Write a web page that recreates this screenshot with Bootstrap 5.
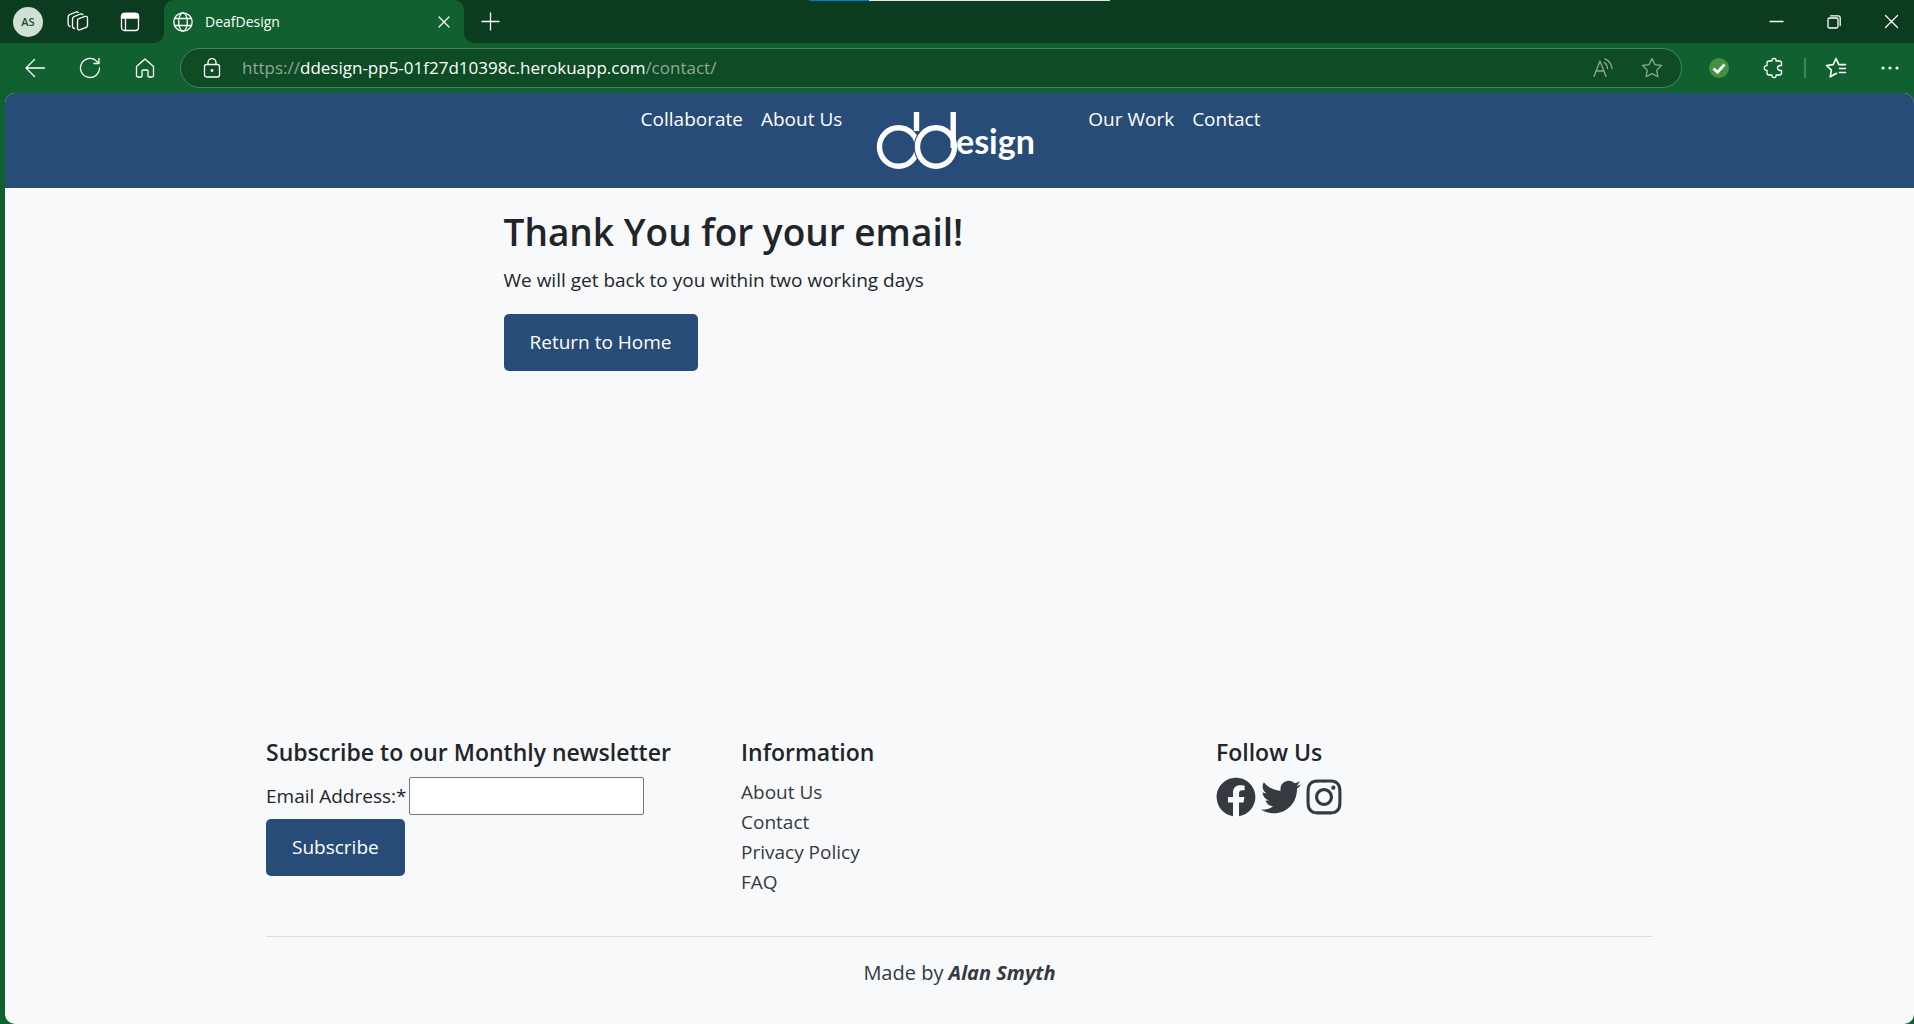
<!DOCTYPE html>
<html lang="en">
<head>
<meta charset="utf-8">
<meta name="viewport" content="width=device-width, initial-scale=1">
<title>DeafDesign</title>
<link href="https://cdn.jsdelivr.net/npm/bootstrap@5.3.0/dist/css/bootstrap.min.css" rel="stylesheet">
<style>
:root{--brand:#274c77;--frame:#10612f;--strip:#0c3c1f;--field:#0d4c24}
body{background:var(--frame);font-family:"Open Sans","Noto Sans",sans-serif;font-size:19px;line-height:30px;min-height:100vh}
svg{display:block;flex:none}
.line-icon{fill:none;stroke:currentColor;stroke-width:1.3;stroke-linecap:round;stroke-linejoin:round}
.bare{background:none;border:0;padding:0;color:#fff;display:flex;align-items:center;justify-content:center}
.strip{background:var(--strip);height:43px}
.strip-left{width:164px;border-bottom-right-radius:10px;padding-left:13px}
.strip-right{border-bottom-left-radius:10px;padding-left:17px;padding-right:15px}
.avatar{width:30px;height:30px;border-radius:50%;background:#cfe0d5;color:#12502a;font-size:11px;font-weight:600}
.tab-back{background:var(--strip)}
.page-tab{width:300px;height:43px;background:var(--frame);border-radius:10px 10px 0 0;font-size:14px;padding:0 14px 0 9px}
.window-buttons{gap:43px}
.loading{top:0;left:809px;width:301px;height:1px;background:linear-gradient(90deg,#0078d4 60px,#e6e6e6 60px)}
.toolbar{height:50px;padding:0 15px 0 25px}
.nav-tools{gap:34px}
.address{height:40px;border:1px solid #4d8061;border-radius:20px;background:var(--field);padding:0 18px 0 21px;margin:0 27px 0 25px;color:#93a79a;font-size:17px}
.address b{font-weight:400;color:#fff}
.dim{color:#8fa497}
.rule{width:2px;height:20px;background:#438159;margin:0 19px}
.wide-gap{margin-left:34px}
.site{margin-left:5px;border-radius:10px;overflow:hidden;background:#f8f9fb;color:#212529}
.site-nav{background:var(--brand);padding:10px 18px 10px 0}
.site-nav a{color:#fff;text-decoration:none;padding:0 9px;line-height:32px}
.site-nav .brand-mark{padding:0 14px}
.wrap{width:100%;max-width:1425px;padding:0 19px;margin:0 auto}
.wrap .row{--bs-gutter-x:38px}
.site h1{font-size:37px;line-height:48px;font-weight:600;margin-bottom:9px}
.site h2{font-size:23px;line-height:30px;font-weight:600;margin-bottom:10px}
.main-area{padding-top:20px;flex:1 0 auto;min-height:549px}
.main-area p{margin-bottom:19px}
.btn-brand{--bs-btn-color:#fff;--bs-btn-bg:var(--brand);--bs-btn-hover-color:#fff;--bs-btn-hover-bg:#1d3a5c;--bs-btn-border-width:0;--bs-btn-border-radius:5px;font-size:19px;line-height:29px;padding:14px 26px}
.mail-box{width:235px;height:38px;border:1px solid #767676;border-radius:2px;background:#fff;margin-left:2px;padding:0 6px}
.foot-links a,.foot-note,.social a{color:#343a40;text-decoration:none}
.social{gap:5px}
.foot-rule{border-top:1px solid #dcdee0;margin-top:39px;padding:21px 0 36px}
.foot-note{font-size:20px}
</style>
<script src="https://cdn.jsdelivr.net/npm/bootstrap@5.3.0/dist/js/bootstrap.bundle.min.js"></script>
</head>
<body class="d-flex flex-column">
<header>
  <div class="loading position-absolute"></div>
  <div class="d-flex">
    <div class="strip strip-left d-flex align-items-center">
      <button class="bare avatar" aria-label="Profile">AS</button>
      <button class="bare ms-4" aria-label="Workspaces"><svg class="line-icon" width="22" height="22" viewBox="0 0 22 22"><path d="M11 8l7-2.6q2.500-.5 2.500 1.600v7.500q0 1.400-1.300 1.900l-6 2.300q-2.700 .9-2.700-1.500V10q0-1.500 .5-2zM7.500 17.500q-2-.2-2-2.500V8q0-2 2-2.700l6-2.300q1.500-.4 2.300 .6M3 15.500q-1.900-.3-1.900-2.500V6q0-2 2-2.700l6-2.300q1.500-.4 2.300 .4"/></svg></button>
      <button class="bare ms-auto me-4" aria-label="Tab actions"><svg class="line-icon" width="20" height="20" viewBox="0 0 20 20"><rect x="1.500" y="1.500" width="17" height="17" rx="3"/><path d="M1.500 6V4.500q0-3 3-3h11q3 0 3 3V6z" fill="currentColor"/><path d="M5.500 6v12.500"/></svg></button>
    </div>
    <div class="tab-back">
      <div class="page-tab d-flex align-items-center">
        <svg class="line-icon text-white" width="20" height="20" viewBox="0 0 20 20"><circle cx="10" cy="10" r="9.200"/><ellipse cx="10" cy="10" rx="4.300" ry="9.200"/><path d="M1.500 6.500h17M1.500 13.500h17"/></svg>
        <span class="text-white ms-2 ps-1">DeafDesign</span>
        <button class="bare ms-auto" aria-label="Close tab"><svg class="line-icon" width="12" height="12" viewBox="0 0 12 12"><path d="M1 1l10 10M11 1L1 11"/></svg></button>
      </div>
    </div>
    <div class="strip strip-right d-flex align-items-center flex-grow-1">
      <button class="bare" aria-label="New tab"><svg class="line-icon" width="19" height="19" viewBox="0 0 19 19"><path d="M9.500 1v17M1 9.500h17"/></svg></button>
      <div class="window-buttons d-flex align-items-center ms-auto">
        <button class="bare" aria-label="Minimise"><svg class="line-icon" width="15" height="15" viewBox="0 0 15 15"><path d="M1 7.500h13"/></svg></button>
        <button class="bare" aria-label="Restore"><svg class="line-icon" width="14" height="14" viewBox="0 0 14 14"><rect x="1" y="3" width="10" height="10" rx="1.500"/><path d="M3.500 .8h7.500q2.200 0 2.200 2.200v7.500"/></svg></button>
        <button class="bare" aria-label="Close window"><svg class="line-icon" width="15" height="15" viewBox="0 0 15 15"><path d="M1.500 1.500l12 12M13.500 1.500l-12 12"/></svg></button>
      </div>
    </div>
  </div>
  <div class="toolbar d-flex align-items-center">
    <div class="nav-tools d-flex align-items-center">
      <button class="bare" aria-label="Back"><svg class="line-icon" width="20" height="20" viewBox="0 0 20 20"><path d="M9.500 1.500L1 10l8.500 8.500M1 10h18.500"/></svg></button>
      <button class="bare" aria-label="Refresh"><svg class="line-icon" width="22" height="22" viewBox="0 0 22 22"><path d="M20.500 11a9.500 9.500 0 1 1-3.500-7.400L20 6.500M20 1.500v5h-5"/></svg></button>
      <button class="bare" aria-label="Home"><svg class="line-icon" width="20" height="20" viewBox="0 0 20 20"><path d="M1.500 8.500L10 1l8.500 7.500v9q0 1.500-1.500 1.500h-3q-1 0-1-1v-5q0-1-1-1H8q-1 0-1 1v5q0 1-1 1H3q-1.500 0-1.500-1.500z"/></svg></button>
    </div>
    <div class="address d-flex align-items-center flex-grow-1">
      <svg class="line-icon text-white" width="20" height="20" viewBox="0 0 20 20"><rect x="2.500" y="6.500" width="15" height="12.500" rx="2"/><path d="M6 6.500V4.500a4 4 0 0 1 8 0v2"/><circle cx="10" cy="12.500" r=".8" fill="currentColor"/></svg>
      <div class="ms-3 ps-1 flex-grow-1" role="textbox" contenteditable="true" spellcheck="false" aria-label="Address">https://<b>ddesign-pp5-01f27d10398c.herokuapp.com</b>/contact/</div>
      <button class="bare dim me-4" aria-label="Read aloud"><svg class="line-icon" width="20" height="20" viewBox="0 0 20 20"><path d="M1 18.500L7 3l6 15.500M3.200 13h7.600M11.500 4.500q3 2.500 3 6M12 .8q6.500 3 7 9.700"/></svg></button>
      <button class="bare dim ms-1" aria-label="Add to favourites"><svg class="line-icon" width="22" height="22" viewBox="0 0 22 22"><path d="M11 1.500l2.900 6.100 6.600 .9-4.800 4.600 1.200 6.700L11 16.600l-5.900 3.200 1.200-6.700L1.500 8.500l6.600-.9z"/></svg></button>
    </div>
    <button class="bare" aria-label="Protection status"><svg width="20" height="20" viewBox="0 0 20 20"><circle cx="10" cy="10" r="10" fill="#43903f"/><path d="M4.500 10.500l4 3.700 7-7.700" fill="none" stroke="#fff" stroke-width="2.800"/></svg></button>
    <button class="bare wide-gap" aria-label="Extensions"><svg class="line-icon" width="22" height="22" viewBox="0 0 22 22"><path d="M4 6q0-2 2-2h3q-.5-2.500 2-2.700 2.500 .2 2 2.700h3.500q2 0 2 2v2.500h-1.500q-2.500 .5-2.500 2.500t2.500 2.500h1.500V16q0 2-2 2H13q.5 2.500-2 2.700Q8.500 20.500 9 18H6q-2 0-2-2v-2.700Q1.300 13.500 1.200 11 1.300 8.500 4 8.700z"/></svg></button>
    <span class="rule"></span>
    <button class="bare" aria-label="Favourites"><svg class="line-icon" width="22" height="22" viewBox="0 0 22 22"><path d="M11.500 16.300l-6.300 3.500 1.200-6.700L1.500 8.500l6.700-.9L11 1.500l2.800 6.100h6.700M14.500 11.500h6M14.500 15.500h6" stroke-width="1.600"/></svg></button>
    <button class="bare wide-gap" aria-label="Settings and more"><svg width="18" height="4" viewBox="0 0 18 4" fill="#fff"><circle cx="2" cy="2" r="1.600"/><circle cx="9" cy="2" r="1.600"/><circle cx="16" cy="2" r="1.600"/></svg></button>
  </div>
</header>
<div class="site d-flex flex-column flex-grow-1">
  <nav class="site-nav d-flex justify-content-center">
    <a href="#">Collaborate</a>
    <a href="#">About Us</a>
    <a href="#" class="brand-mark" aria-label="Home"><svg width="200" height="75" viewBox="0 0 200 75"><g fill="none"><ellipse cx="33.500" cy="44" rx="19" ry="19.300" stroke="#fff" stroke-width="5.400"/><ellipse cx="71" cy="44" rx="18.500" ry="19.300" stroke="#274c77" stroke-width="7.500"/><ellipse cx="71" cy="44" rx="18.500" ry="19.300" stroke="#fff" stroke-width="5.400"/><path d="M51.500 9v19M88.200 9v36" stroke="#fff" stroke-width="5.400"/></g><text x="91" y="51" fill="#fff" font-family="Lato,sans-serif" font-size="34" font-weight="700">esign</text></svg></a>
    <a href="#">Our Work</a>
    <a href="#">Contact</a>
  </nav>
  <main class="main-area">
    <div class="wrap">
      <div class="row">
        <div class="col-8 offset-2">
          <h1>Thank You for your email!</h1>
          <p>We will get back to you within two working days</p>
          <a href="#" class="btn btn-brand">Return to Home</a>
        </div>
      </div>
    </div>
  </main>
  <footer class="wrap">
    <div class="row">
      <div class="col-4">
        <h2>Subscribe to our Monthly newsletter</h2>
        <form>
          <div class="d-flex align-items-center mb-1"><label for="mail">Email Address:*</label><input id="mail" type="email" class="mail-box"></div>
          <button type="button" class="btn btn-brand">Subscribe</button>
        </form>
      </div>
      <div class="col-4">
        <h2>Information</h2>
        <ul class="list-unstyled mb-0 foot-links">
          <li><a href="#">About Us</a></li>
          <li><a href="#">Contact</a></li>
          <li><a href="#">Privacy Policy</a></li>
          <li><a href="#">FAQ</a></li>
        </ul>
      </div>
      <div class="col-4">
        <h2>Follow Us</h2>
        <div class="social d-flex">
          <a href="#" aria-label="Facebook"><svg width="40" height="40" viewBox="0 0 512 512" fill="currentColor"><path d="M504 256C504 119 393 8 256 8S8 119 8 256c0 123.780 90.690 226.380 209.250 245V327.690h-63V256h63v-54.640c0-62.150 37-96.480 93.670-96.480 27.140 0 55.520 4.840 55.520 4.840v61h-31.280c-30.800 0-40.410 19.120-40.410 38.730V256h68.780l-11 71.690h-57.780V501C413.310 482.380 504 379.780 504 256z"/></svg></a>
          <a href="#" aria-label="Twitter"><svg width="40" height="40" viewBox="0 0 512 512" fill="currentColor"><path d="M459.370 151.716c.325 4.548.325 9.097.325 13.645 0 138.720-105.583 298.558-298.558 298.558-59.452 0-114.680-17.219-161.137-47.106 8.447.974 16.568 1.299 25.340 1.299 49.055 0 94.213-16.568 130.274-44.832-46.132-.975-84.792-31.188-98.112-72.772 6.498.974 12.995 1.624 19.818 1.624 9.421 0 18.843-1.300 27.614-3.573-48.081-9.747-84.143-51.980-84.143-102.985v-1.299c13.969 7.797 30.214 12.670 47.431 13.319-28.264-18.843-46.781-51.005-46.781-87.391 0-19.492 5.197-37.360 14.294-52.954 51.655 63.675 129.300 105.258 216.365 109.807-1.624-7.797-2.599-15.918-2.599-24.040 0-57.828 46.782-104.934 104.934-104.934 30.213 0 57.502 12.670 76.670 33.137 23.715-4.548 46.456-13.320 66.599-25.340-7.798 24.366-24.366 44.833-46.132 57.827 21.117-2.273 41.584-8.122 60.426-16.243-14.292 20.791-32.161 39.308-52.628 54.253z"/></svg></a>
          <a href="#" aria-label="Instagram"><svg width="36" height="40" viewBox="0 0 448 512" fill="currentColor"><path d="M224.100 141c-63.600 0-114.900 51.300-114.900 114.900s51.300 114.900 114.900 114.900S339 319.500 339 255.900 287.700 141 224.100 141zm0 189.600c-41.100 0-74.700-33.500-74.700-74.700s33.500-74.700 74.700-74.700 74.700 33.500 74.700 74.700-33.600 74.700-74.700 74.700zm146.400-194.300c0 14.900-12 26.800-26.800 26.800-14.900 0-26.800-12-26.800-26.800s12-26.800 26.800-26.800 26.800 12 26.800 26.800zm76.100 27.200c-1.700-35.900-9.900-67.700-36.200-93.900-26.200-26.200-58-34.400-93.900-36.200-37-2.100-147.900-2.100-184.900 0-35.800 1.700-67.600 9.900-93.900 36.100s-34.400 58-36.200 93.900c-2.100 37-2.100 147.900 0 184.900 1.700 35.900 9.900 67.700 36.200 93.900s58 34.400 93.900 36.200c37 2.100 147.900 2.100 184.900 0 35.900-1.700 67.700-9.900 93.900-36.200 26.200-26.200 34.400-58 36.200-93.900 2.100-37 2.100-147.800 0-184.800zM398.800 388c-7.800 19.600-22.900 34.700-42.600 42.600-29.500 11.700-99.500 9-132.100 9s-102.700 2.600-132.100-9c-19.600-7.800-34.700-22.900-42.600-42.600-11.700-29.500-9-99.500-9-132.100s-2.600-102.700 9-132.100c7.800-19.600 22.900-34.700 42.600-42.600 29.500-11.700 99.500-9 132.100-9s102.700-2.600 132.100 9c19.600 7.800 34.700 22.900 42.600 42.600 11.700 29.500 9 99.500 9 132.100s2.700 102.700-9 132.100z"/></svg></a>
        </div>
      </div>
    </div>
    <div class="foot-rule foot-note text-center">Made by <strong><em>Alan Smyth</em></strong></div>
  </footer>
</div>
</body>
</html>
